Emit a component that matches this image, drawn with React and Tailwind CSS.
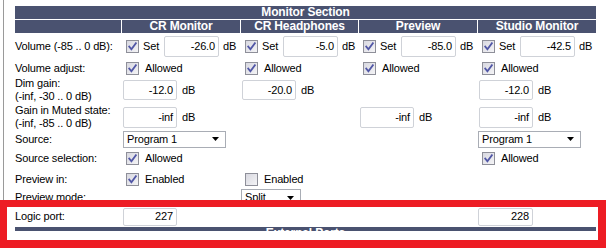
import React from "react";

const FONT = { fontFamily: '"Liberation Sans", Arial, sans-serif' };

function Check({ checked = true }) {
  return (
    <span className="inline-flex w-[13px] h-[13px] shrink-0 items-center justify-center border border-[#8e8f99] bg-gradient-to-br from-[#d8d8e0] to-[#f4f4f6]">
      {checked && (
        <svg width="9" height="9" viewBox="0 0 9 9">
          <path d="M1.2 4.6 L3.4 7.2 L7.9 1.2" fill="none" stroke="#5157a6" strokeWidth="1.8" strokeLinecap="square" />
        </svg>
      )}
    </span>
  );
}

function Box({ value, w = "w-[55px]", h = "h-[21px]" }) {
  return (
    <div className={`${w} ${h} shrink-0 border border-[#cfd2d8] rounded-[2px] bg-white flex items-center justify-end pr-[3px]`}>
      {value}
    </div>
  );
}

function Select({ value, w = "w-[103px]" }) {
  return (
    <div className={`${w} h-[17px] shrink-0 border border-[#a9adb5] bg-white flex items-center justify-between pl-[3px] pr-[6px]`}>
      <span>{value}</span>
      <svg width="7" height="4" viewBox="0 0 7 4">
        <path d="M0 0 H7 L3.5 4 Z" fill="#000" />
      </svg>
    </div>
  );
}

function VolCell({ value }) {
  return (
    <div className="flex items-center pl-[4px]">
      <Check />
      <span className="ml-[4px] w-[21px]">Set</span>
      <Box value={value} />
      <span className="ml-[4px]">dB</span>
    </div>
  );
}

function CheckCell({ label, checked = true }) {
  return (
    <div className="flex items-center pl-[4px]">
      <Check checked={checked} />
      <span className="ml-[6px]">{label}</span>
    </div>
  );
}

function BoxCell({ value, h }) {
  return (
    <div className="flex items-center pl-[1px]">
      <Box value={value} w="w-[54px]" h={h} />
      <span className="ml-[5px]">dB</span>
    </div>
  );
}

const GRID = "grid grid-cols-[106px_118px_117px_118px_118px] gap-x-px";

function Row({ h, children }) {
  return <div className={`${GRID} ${h} items-center`}>{children}</div>;
}

export default function App() {
  return (
    <div className="relative w-[606px] h-[248px] overflow-hidden bg-white text-black text-[11px] tracking-[-0.15px]" style={FONT}>
      <div className="flex h-full">
        <div className="w-[3px]" />
        <div className="w-px bg-[#9a9a9a]" />
        <div className="w-[11px]" />
        <div className="w-[581px] pt-[6px]">
          <div className="h-[13px] bg-[#4a5270] text-white font-bold text-[12px] leading-[13px] text-center">Monitor Section</div>
          <div className={`${GRID} mt-px bg-white h-[13px] text-white font-bold text-[12px] leading-[13px] text-center`}>
            <div className="bg-[#4a5270]" />
            <div className="bg-[#4a5270]">CR Monitor</div>
            <div className="bg-[#4a5270]">CR Headphones</div>
            <div className="bg-[#4a5270]">Preview</div>
            <div className="bg-[#4a5270]">Studio Monitor</div>
          </div>

          <Row h="h-[27px]">
            <div>Volume (-85 .. 0 dB):</div>
            <VolCell value="-26.0" />
            <VolCell value="-5.0" />
            <VolCell value="-85.0" />
            <VolCell value="-42.5" />
          </Row>

          <Row h="h-[16px]">
            <div>Volume adjust:</div>
            <CheckCell label="Allowed" />
            <CheckCell label="Allowed" />
            <CheckCell label="Allowed" />
            <CheckCell label="Allowed" />
          </Row>

          <Row h="h-[28px]">
            <div className="leading-[13px]">
              <div>Dim gain:</div>
              <div>(-inf, -30 .. 0 dB)</div>
            </div>
            <BoxCell value="-12.0" h="h-[20px]" />
            <BoxCell value="-20.0" h="h-[20px]" />
            <div />
            <BoxCell value="-12.0" h="h-[20px]" />
          </Row>

          <Row h="h-[26px]">
            <div className="leading-[13px]">
              <div>Gain in Muted state:</div>
              <div>(-inf, -85 .. 0 dB)</div>
            </div>
            <BoxCell value="-inf" h="h-[21px]" />
            <div />
            <BoxCell value="-inf" h="h-[21px]" />
            <BoxCell value="-inf" h="h-[21px]" />
          </Row>

          <Row h="h-[18px]">
            <div>Source:</div>
            <div className="pl-[1px]"><Select value="Program 1" /></div>
            <div />
            <div />
            <div><Select value="Program 1" /></div>
          </Row>

          <Row h="h-[21px]">
            <div>Source selection:</div>
            <CheckCell label="Allowed" />
            <div />
            <div />
            <CheckCell label="Allowed" />
          </Row>

          <Row h="h-[20px]">
            <div>Preview in:</div>
            <CheckCell label="Enabled" />
            <CheckCell label="Enabled" checked={false} />
            <div />
            <div />
          </Row>

          <Row h="h-[17px]">
            <div>Preview mode:</div>
            <div />
            <div><Select value="Split" w="w-[60px]" /></div>
            <div />
            <div />
          </Row>

          <Row h="h-[21px]">
            <div>Logic port:</div>
            <div className="pl-[1px]"><Box value="227" w="w-[54px]" h="h-[18px]" /></div>
            <div />
            <div />
            <div><Box value="228" w="w-[55px]" h="h-[18px]" /></div>
          </Row>

          <div className="h-[13px] bg-[#4a5270] text-white font-bold text-[12px] leading-[13px] text-center">External Ports</div>
        </div>
      </div>

      <div className="absolute left-0 top-[200px] w-[606px] h-[48px] border-[#ed1c24] border-t-[7px] border-l-[7px] border-r-[8px] border-b-[8px]">
        <div className="absolute left-0 right-0 top-[24px] bottom-0 bg-white" />
      </div>
    </div>
  );
}
